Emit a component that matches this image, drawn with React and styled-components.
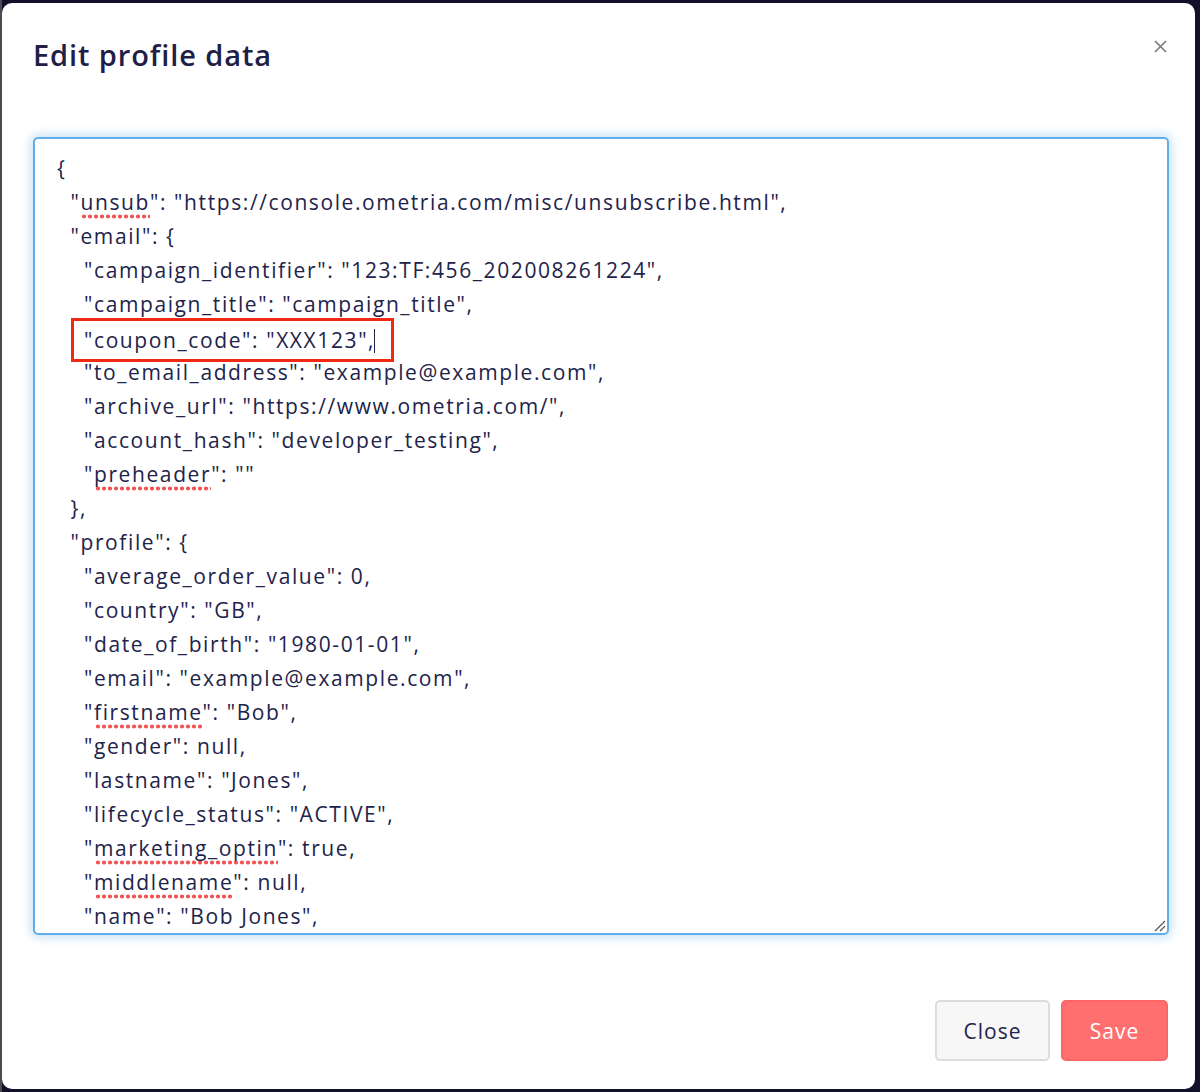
import React from 'react'
import styled, { createGlobalStyle } from 'styled-components'

const GlobalStyle = createGlobalStyle`
  html, body {
    margin: 0;
    padding: 0;
    background: #13112a;
    font-family: "Open Sans", "Noto Sans", sans-serif;
  }
  #root {
    padding: 3px 5px 3px 2px;
    background: linear-gradient(90deg, #4a4a4f 0, #4a4a4f 2px, #13112a 2px);
  }
`

const jsonLines = [
  { level: 0, parts: ['{'] },
  { level: 1, parts: ['"', { bad: 'unsub' }, '": "https://console.ometria.com/misc/unsubscribe.html",'] },
  { level: 1, parts: ['"email": {'] },
  { level: 2, parts: ['"campaign_identifier": "123:TF:456_202008261224",'] },
  { level: 2, parts: ['"campaign_title": "campaign_title",'] },
  { level: 2, parts: ['"coupon_code": "XXX123",'], marked: true },
  { level: 2, parts: ['"to_email_address": "example@example.com",'] },
  { level: 2, parts: ['"archive_url": "https://www.ometria.com/",'] },
  { level: 2, parts: ['"account_hash": "developer_testing",'] },
  { level: 2, parts: ['"', { bad: 'preheader' }, '": ""'] },
  { level: 1, parts: ['},'] },
  { level: 1, parts: ['"profile": {'] },
  { level: 2, parts: ['"average_order_value": 0,'] },
  { level: 2, parts: ['"country": "GB",'] },
  { level: 2, parts: ['"date_of_birth": "1980-01-01",'] },
  { level: 2, parts: ['"email": "example@example.com",'] },
  { level: 2, parts: ['"', { bad: 'firstname' }, '": "Bob",'] },
  { level: 2, parts: ['"gender": null,'] },
  { level: 2, parts: ['"lastname": "Jones",'] },
  { level: 2, parts: ['"lifecycle_status": "ACTIVE",'] },
  { level: 2, parts: ['"', { bad: 'marketing_optin' }, '": true,'] },
  { level: 2, parts: ['"', { bad: 'middlename' }, '": null,'] },
  { level: 2, parts: ['"name": "Bob Jones",'] },
]

const App = () => {
  return (
    <>
      <GlobalStyle />
      <Modal>
        <Header>
          <Title>Edit profile data</Title>
          <CloseX aria-label="close">
            <svg width="13" height="13" viewBox="0 0 13 13">
              <path d="M1 1L12 12M12 1L1 12" stroke="#7a7a7a" strokeWidth="1.7" />
            </svg>
          </CloseX>
        </Header>
        <Body>
          <Editor>
            {jsonLines.map((line, i) => (
              <Line key={i} level={line.level}>
                <Marked $on={line.marked}>
                  {line.parts.map((p, j) =>
                    typeof p === 'string' ? p : <Misspelled key={j}>{p.bad}</Misspelled>
                  )}
                  {line.marked && <Caret />}
                </Marked>
              </Line>
            ))}
            <Grip>
              <svg width="14" height="14" viewBox="0 0 14 14">
                <path d="M13 3L3 13M13 8L8 13" stroke="#555" strokeWidth="1.2" />
              </svg>
            </Grip>
          </Editor>
        </Body>
        <Footer>
          <Button>Close</Button>
          <Button primary>Save</Button>
        </Footer>
      </Modal>
    </>
  )
}

const Modal = styled.div`
  background: #fff;
  border-radius: 10px;
  height: 1086px;
  box-sizing: border-box;
  display: flex;
  flex-direction: column;
  color: #22234a;
`

const Header = styled.div`
  display: flex;
  align-items: flex-start;
  justify-content: space-between;
  padding: 33px 28px 0 31px;
  height: 134px;
  box-sizing: border-box;
`

const Title = styled.h1`
  margin: 0;
  font-size: 29px;
  font-weight: 600;
  letter-spacing: 0.9px;
  color: #1f2047;
  line-height: 38px;
`

const CloseX = styled.div`
  margin-top: 3px;
  width: 14px;
  height: 14px;
  display: flex;
  align-items: center;
  justify-content: center;
`

const Body = styled.div`
  padding: 0 26px 0 31px;
`

const Editor = styled.div`
  position: relative;
  height: 798px;
  box-sizing: border-box;
  border: 2px solid #5eaeea;
  border-radius: 5px;
  box-shadow: 0 0 10px 3px rgba(102, 175, 233, 0.35);
  padding: 12px 20px 0 22px;
  overflow: hidden;
  font-size: 21px;
  letter-spacing: 1.6px;
  line-height: 34px;
  white-space: pre;
  color: #22234a;
`

const Line = styled.div`
  padding-left: ${p => p.level * 13.5}px;
  height: 34px;
`

const Marked = styled.span`
  display: inline-block;
  position: relative;
  ${p => p.$on && `
    outline: 3px solid #f02a12;
    outline-offset: 0;
    margin-left: -10px;
    padding: 2px 16px 2px 10px;
    line-height: 34px;
  `}
`

const Caret = styled.span`
  position: absolute;
  right: 16px;
  top: 8px;
  width: 1.5px;
  height: 24px;
  background: #22234a;
`

const Misspelled = styled.span`
  background-image: radial-gradient(circle, #f25555 1.7px, transparent 2.3px);
  background-repeat: repeat-x;
  background-size: 6px 5px;
  background-position: 1px 100%;
  padding-bottom: 3px;
`

const Grip = styled.div`
  position: absolute;
  right: 1px;
  bottom: 1px;
  line-height: 0;
`

const Footer = styled.div`
  margin-top: auto;
  display: flex;
  justify-content: flex-end;
  gap: 11px;
  padding: 0 27px 28px 0;
`

const Button = styled.button`
  height: 61px;
  padding: 0 20px;
  min-width: ${p => (p.primary ? 107 : 115)}px;
  border-radius: 5px;
  font-family: "Open Sans", "Noto Sans", sans-serif;
  font-size: 21px;
  font-weight: 500;
  letter-spacing: 1px;
  border: 2px solid ${p => (p.primary ? '#fb6565' : '#dcdcdc')};
  background: ${p => (p.primary ? '#ff6f6f' : '#f7f7f7')};
  color: ${p => (p.primary ? '#fff' : '#22234a')};
`

export default App
